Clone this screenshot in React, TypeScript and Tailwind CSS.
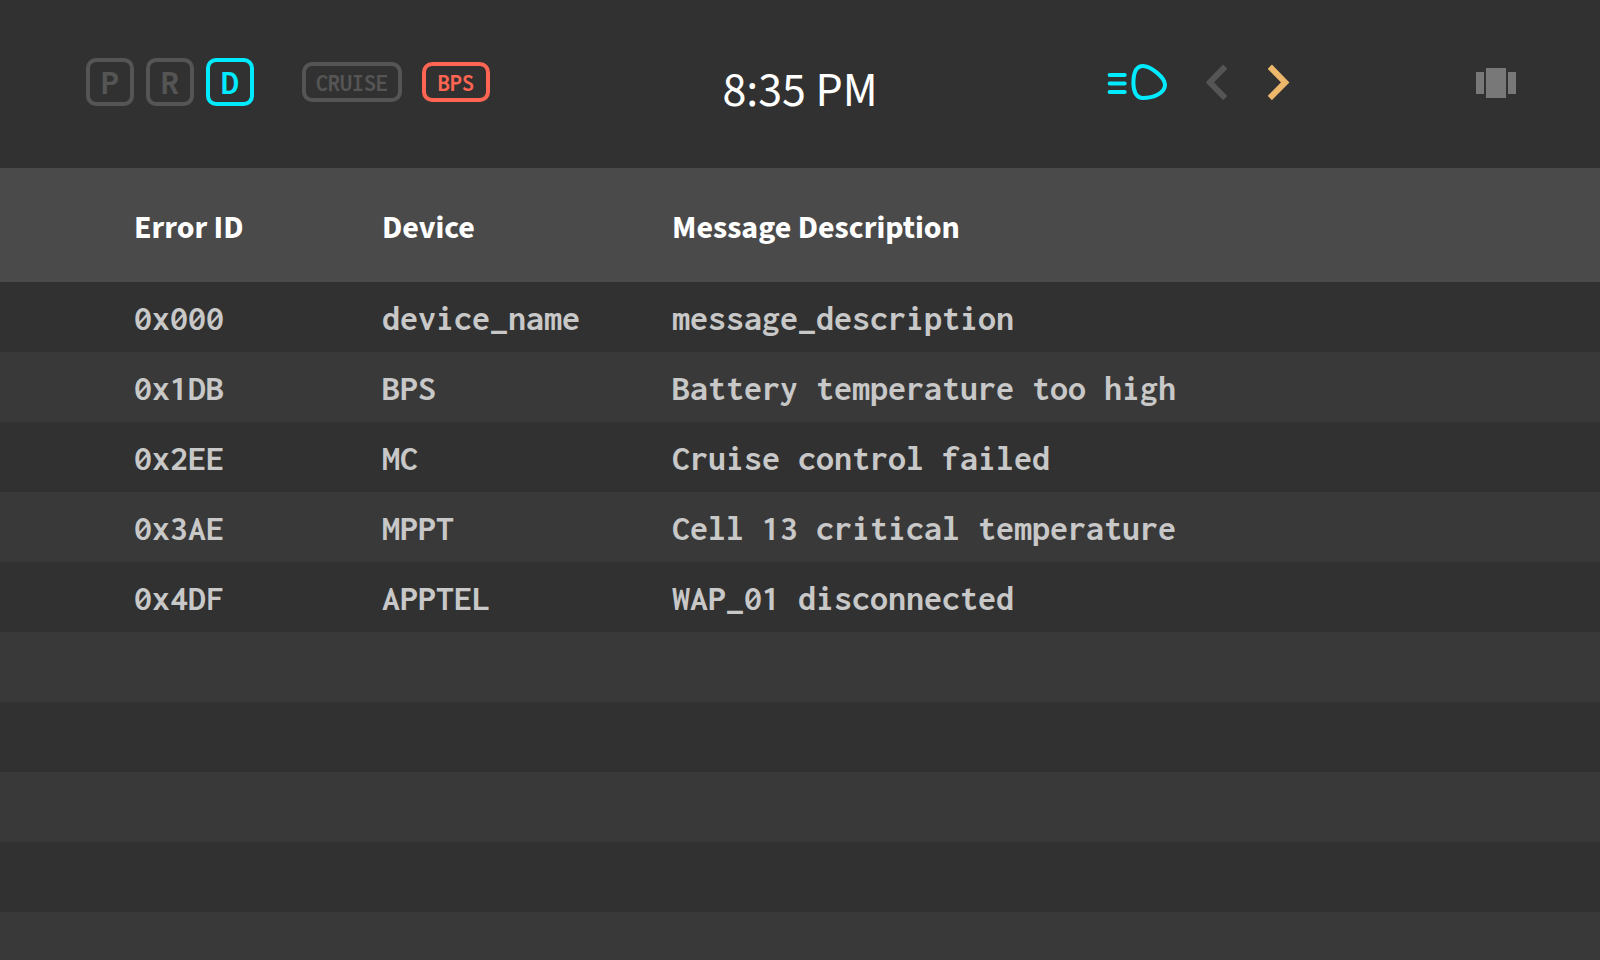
import type { ReactNode } from "react";

type ErrorRow = { id: string; device: string; message: string };

const errors: ErrorRow[] = [
  { id: "0x000", device: "device_name", message: "message_description" },
  { id: "0x1DB", device: "BPS", message: "Battery temperature too high" },
  { id: "0x2EE", device: "MC", message: "Cruise control failed" },
  { id: "0x3AE", device: "MPPT", message: "Cell 13 critical temperature" },
  { id: "0x4DF", device: "APPTEL", message: "WAP_01 disconnected" },
];

const EMPTY_ROWS = 5;

const MONO = "font-['Inconsolata','DejaVu_Sans_Mono',monospace]";
const SANS = "font-['Source_Sans_3','Noto_Sans_CJK_SC',sans-serif]";

function Gear({ label, active = false }: { label: string; active?: boolean }) {
  return (
    <li
      aria-current={active}
      className={`flex size-12 items-center justify-center rounded-[10px] border-4 text-[36px] leading-10 font-bold ${
        active ? "border-[#00ebff] text-[#00ebff]" : "border-[#555555] text-[#555555]"
      }`}
    >
      {label}
    </li>
  );
}

function Badge({ tone, children }: { tone: "off" | "alert"; children: ReactNode }) {
  return (
    <span
      className={`flex h-10 items-center rounded-[10px] border-4 pt-0.5 text-[24px] leading-8 font-[650] ${
        tone === "alert" ? "border-[#ff6552] px-3 text-[#ff6552]" : "border-[#555555] px-2.5 text-[#555555]"
      }`}
    >
      {children}
    </span>
  );
}

function HeadlightIcon() {
  return (
    <svg role="img" aria-label="Headlights" width="62" height="40" viewBox="0 0 62 40" fill="none" stroke="#00ebff" strokeWidth="4" strokeLinecap="round">
      <path d="M3.6 13H18.7M3.6 21.5H18.7M3.6 30H18.7" />
      <path d="M37 4C44.5 4 59 15.5 59 22.7C59 31 47.5 36 37 36C30 36 27.4 29 27.4 21C27.4 11 30 4 37 4Z" />
    </svg>
  );
}

function TurnSignal({ side, color }: { side: "left" | "right"; color: string }) {
  return (
    <svg role="img" aria-label={`Turn signal ${side}`} width="22" height="36" viewBox="0 0 22 36" fill="none" stroke={color} strokeWidth="6">
      <path d={side === "left" ? "M19.2 2.7L3.8 18.4L19.2 34" : "M1.8 2.7L17.2 18.4L1.8 34"} />
    </svg>
  );
}

function StatusBar() {
  return (
    <header className="grid h-[168px] shrink-0 grid-cols-[1fr_auto_1fr] items-center px-[84px] pb-1">
      <div className={`flex items-center pl-0.5 ${MONO}`}>
        <ul className="flex gap-3">
          <Gear label="P" />
          <Gear label="R" />
          <Gear label="D" active />
        </ul>
        <div className="ml-12 flex gap-5">
          <Badge tone="off">CRUISE</Badge>
          <Badge tone="alert">BPS</Badge>
        </div>
      </div>
      <time className={`pt-[18px] text-[48px] leading-[60px] text-white ${SANS}`}>8:35 PM</time>
      <div className="flex items-center justify-end">
        <HeadlightIcon />
        <div className="mr-[186px] ml-[38px] flex gap-10">
          <TurnSignal side="left" color="#555555" />
          <TurnSignal side="right" color="#edb86c" />
        </div>
        <button type="button" aria-label="Switch view" className="flex items-center">
          <svg width="40" height="32" viewBox="0 0 40 32" fill="#787878">
            <path d="M0 6H8V28H0ZM10 2H30V32H10ZM32 6H40V28H32Z" />
          </svg>
        </button>
      </div>
    </header>
  );
}

export default function App() {
  return (
    <div className="flex h-screen flex-col overflow-hidden bg-[#313131]">
      <StatusBar />
      <main>
        <table className="w-full table-fixed border-collapse text-left whitespace-pre">
          <colgroup>
            <col className="w-[382px]" />
            <col className="w-[290px]" />
            <col />
          </colgroup>
          <thead className={`bg-[#4a4a4a] text-[32px] leading-10 text-white ${SANS}`}>
            <tr className="h-[114px]">
              <th scope="col" className="p-0 pt-1.5 pl-[134px] font-bold">Error ID</th>
              <th scope="col" className="p-0 pt-1.5 font-bold">Device</th>
              <th scope="col" className="p-0 pt-1.5 font-bold">Message Description</th>
            </tr>
          </thead>
          <tbody className={`text-[36px] leading-10 font-[650] text-[#c8c8c8] ${MONO}`}>
            {errors.map((row) => (
              <tr key={row.id} className="h-[70px] even:bg-[#393939]">
                <td className="p-0 pt-0.5 pl-[134px]">{row.id}</td>
                <td className="p-0 pt-0.5">{row.device}</td>
                <td className="p-0 pt-0.5">{row.message}</td>
              </tr>
            ))}
            {Array.from({ length: EMPTY_ROWS }, (_, i) => (
              <tr key={i} className="h-[70px] even:bg-[#393939]">
                <td colSpan={3} className="p-0" />
              </tr>
            ))}
          </tbody>
        </table>
      </main>
    </div>
  );
}
